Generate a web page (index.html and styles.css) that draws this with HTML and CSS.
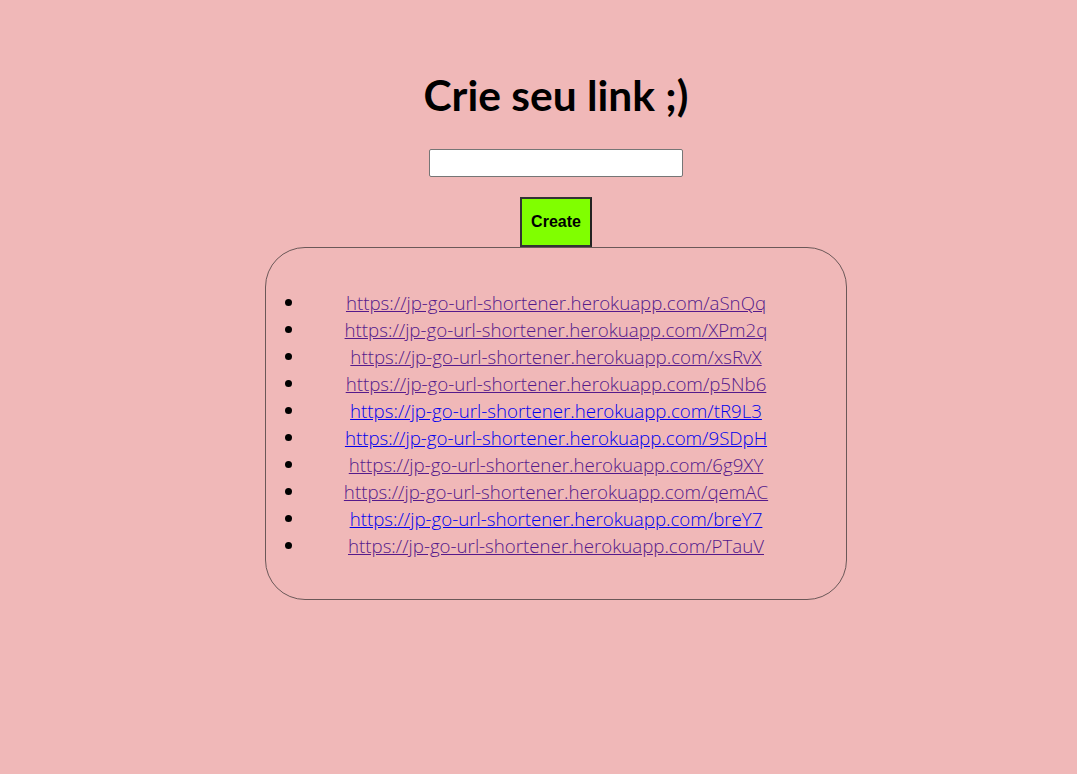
FILE: index.html
```html
<!DOCTYPE html>
<html>
<head>
<meta charset="utf-8">
<link rel="stylesheet" href="styles.css">
</head>
<body>
<div class="page">
  <h1 class="title">Crie seu link ;)</h1>
  <div class="form">
    <input class="url-input" type="text">
    <button class="create-btn">Create</button>
  </div>
  <div class="links-box">
    <ul class="links">
      <li><a class="visited" href="#a">https://jp-go-url-shortener.herokuapp.com/aSnQq</a></li>
      <li><a class="visited" href="#b">https://jp-go-url-shortener.herokuapp.com/XPm2q</a></li>
      <li><a class="visited" href="#c">https://jp-go-url-shortener.herokuapp.com/xsRvX</a></li>
      <li><a class="visited" href="#d">https://jp-go-url-shortener.herokuapp.com/p5Nb6</a></li>
      <li><a class="fresh" href="#e">https://jp-go-url-shortener.herokuapp.com/tR9L3</a></li>
      <li><a class="fresh" href="#f">https://jp-go-url-shortener.herokuapp.com/9SDpH</a></li>
      <li><a class="visited" href="#g">https://jp-go-url-shortener.herokuapp.com/6g9XY</a></li>
      <li><a class="visited" href="#h">https://jp-go-url-shortener.herokuapp.com/qemAC</a></li>
      <li><a class="fresh" href="#i">https://jp-go-url-shortener.herokuapp.com/breY7</a></li>
      <li><a class="visited" href="#j">https://jp-go-url-shortener.herokuapp.com/PTauV</a></li>
    </ul>
  </div>
</div>
</body>
</html>
```
FILE: styles.css
```css
html, body {
  margin: 0;
  padding: 0;
  background: #f0b8b8;
}
body {
  font-family: "Open Sans", "Noto Sans", sans-serif;
}
.page {
  padding: 0 0 0 35px;
  display: flex;
  flex-direction: column;
  align-items: center;
}
.title {
  margin: 70px 0 0 0;
  font-family: "Lato", "Open Sans", sans-serif;
  font-weight: 700;
  font-size: 42.5px;
  line-height: 50px;
  color: #000;
}
.form {
  display: flex;
  flex-direction: column;
  align-items: center;
  margin-top: 29px;
}
.url-input {
  box-sizing: border-box;
  width: 254px;
  height: 28px;
  border: 1px solid #767676;
  border-radius: 2px;
  background: #fff;
  margin: 0;
  padding: 0 4px;
}
.create-btn {
  box-sizing: border-box;
  margin-top: 20px;
  width: 72px;
  height: 50px;
  background: #80ff00;
  border: 2px solid #333;
  border-right-color: #222;
  font-family: "Liberation Sans", Arial, sans-serif;
  font-weight: 700;
  font-size: 16px;
  color: #000;
  padding: 0;
}
.links-box {
  box-sizing: border-box;
  width: 582px;
  border: 1px solid #6b5858;
  border-radius: 40px;
  padding: 25px 0 24px;
}
.links {
  margin: 16px 0;
  padding: 0 40px;
  text-align: center;
  list-style: disc;
}
.links li {
  font-size: 18.7px;
  line-height: 27px;
  font-weight: 300;
}
.links li::marker {
  font-size: 20px;
}
.links a {
  text-decoration: underline;
}
.links a.visited {
  color: #551a8b;
}
.links a.fresh {
  color: #0000ee;
}
```
